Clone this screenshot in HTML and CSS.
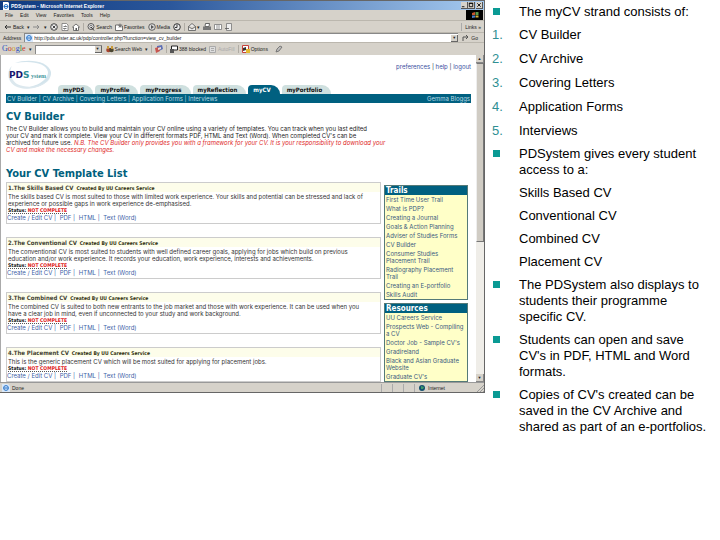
FILE: index.html
```html
<!DOCTYPE html>
<html lang="en">
<head>
<meta charset="utf-8">
<title>PDSystem - myCV</title>
<link rel="stylesheet" href="styles.css">
</head>
<body>
<main class="slide">
  <section class="browser" aria-label="PDSystem browser window">
    <header class="titlebar">
      <svg class="ic" viewBox="0 0 8 8"><path fill="#fff" d="M1 0h5l1 1v7H1z"/><circle cx="4" cy="4.500" r="2" fill="none" stroke="#2672c8"/><path stroke="#2672c8" d="M2 4.500h4"/></svg>
      <span class="grow">PDSystem - Microsoft Internet Explorer</span>
      <span class="winbtns">
        <button aria-label="Minimise"><svg viewBox="0 0 7 7"><path stroke="#000" d="M1 5.500h3"/></svg></button>
        <button aria-label="Maximise"><svg viewBox="0 0 7 7"><path fill="none" stroke="#000" d="M1.500 1.500h4v4h-4zM1 1.500h5"/></svg></button>
        <button aria-label="Close"><svg viewBox="0 0 7 7"><path stroke="#000" d="M1.500 1.500l4 4m0-4l-4 4"/></svg></button>
      </span>
    </header>

    <nav class="menubar">
      <button>File</button><button>Edit</button><button>View</button><button>Favorites</button><button>Tools</button><button>Help</button>
      <svg class="flag" viewBox="0 0 17 10"><path fill="#000" d="M0 0h17v10H0z"/><path fill="#c9552e" d="M6 3l3-1v3L6 5z"/><path fill="#5c9a4a" d="M9.500 2l3 0v3l-3 0z"/><path fill="#4a7ac4" d="M6 5.500l3 0v2L6 8z"/><path fill="#d5b23c" d="M9.500 5.500h3v2h-3z"/></svg>
    </nav>

    <div class="toolbar">
      <button><svg class="ic" viewBox="0 0 8 8"><path fill="none" stroke="#333" d="M7 4H1m2-2L1 4l2 2"/></svg>Back</button>
      <span class="arrow">▾</span>
      <button aria-label="Forward"><svg class="ic" viewBox="0 0 8 8"><path fill="none" stroke="#888" d="M0 4h6M4 2l2 2-2 2"/></svg></button>
      <span class="arrow">▾</span>
      <button aria-label="Stop"><svg class="ic" viewBox="0 0 8 8"><circle cx="4" cy="4" r="3.300" fill="#eee" stroke="#444"/><path stroke="#444" d="M2.500 2.500l3 3m0-3l-3 3"/></svg></button>
      <button aria-label="Refresh"><svg class="ic" viewBox="0 0 8 8"><path fill="#fff" stroke="#666" stroke-width=".7" d="M1 .5h4.500l1.500 1.500v5.500H1z"/><path fill="none" stroke="#444" stroke-width=".7" d="M2.500 3.500h3l-1-1m1 3h-3l1 1"/></svg></button>
      <button aria-label="Home"><svg class="ic" viewBox="0 0 8 8"><path fill="#fff" stroke="#555" stroke-width=".8" d="M.5 4L4 1l3.500 3H6.500v3.500h-5V4z"/><path fill="#555" d="M3.500 5h1.500v2.500H3.500z"/></svg></button>
      <i class="sep"></i>
      <button><svg class="ic" viewBox="0 0 8 8"><circle cx="4" cy="3.500" r="3" fill="#eee" stroke="#333" stroke-width=".8"/><path stroke="#333" d="M4 4l3 3.500"/><circle cx="4" cy="3.500" r="1.300" fill="none" stroke="#333" stroke-width=".6"/></svg>Search</button>
      <button><svg class="ic" viewBox="0 0 8 8"><path fill="#fff" stroke="#555" stroke-width=".8" d="M.5 2h3l1 1h3v4.500h-7z"/><path fill="#777" d="M5 0l.7 1.500H7.500L6 3l.5 2L5 4 3.500 5 4 3 2.500 1.500h1.800z"/></svg>Favorites</button>
      <button><svg class="ic" viewBox="0 0 8 8"><circle cx="4" cy="4" r="3.300" fill="#ddd" stroke="#444" stroke-width=".8"/><path fill="#555" d="M3 2l3 2-3 2z"/></svg>Media</button>
      <button aria-label="History"><svg class="ic" viewBox="0 0 8 8"><circle cx="4" cy="4" r="3.300" fill="#eee" stroke="#333"/><path fill="none" stroke="#333" d="M4 1.500V4.500H2"/></svg></button>
      <i class="sep"></i>
      <button aria-label="Mail"><svg class="ic" viewBox="0 0 8 8"><path fill="#eee" stroke="#555" stroke-width=".8" d="M.5 3.500L4 .5l3.500 3v4h-7zM.5 3.500L4 6l3.500-2.500"/></svg><span class="arrow">▾</span></button>
      <button aria-label="Print"><svg class="ic" viewBox="0 0 8 8"><path fill="#fff" stroke="#444" stroke-width=".8" d="M2.500.5h4L6 3.500H2z"/><path fill="#777" d="M0 3.500h8V7H0z"/></svg></button>
      <button aria-label="Edit"><svg class="ic" viewBox="0 0 8 8"><path fill="#fff" stroke="#777" stroke-width=".8" d="M.5 1.500h7v5h-7z"/><path stroke="#777" stroke-width=".8" d="M2 3h4M2 5h4"/></svg></button>
      <button aria-label="Discuss"><svg class="ic" viewBox="0 0 8 8"><path fill="#eee" stroke="#777" stroke-width=".8" d="M1.500.5h5v7h-5z"/><path stroke="#555" stroke-width=".8" d="M0 5.500h4"/></svg></button>
      <span class="links">Links »</span>
    </div>

    <div class="toolbar address">
      <label for="addr">Address</label>
      <span class="field">
        <svg class="ic" viewBox="0 0 8 8"><path fill="#d9e9fb" d="M0 0h6l2 2v6H0z"/><circle cx="4" cy="4" r="2.400" fill="none" stroke="#2672c8"/><path stroke="#2672c8" d="M2 4h4"/></svg>
        <input id="addr" type="text" value="http://pds.ulster.ac.uk/pdp/controller.php?function=view_cv_builder">
        <button class="drop" aria-label="Show addresses">▼</button>
      </span>
      <button class="go"><svg class="ic" viewBox="0 0 8 8"><path fill="none" stroke="#555" d="M1 7V3h5M4 1l2 2-2 2"/></svg>Go</button>
    </div>

    <div class="toolbar google">
      <label for="gs" class="brand"><b class="b">G</b><b class="r">o</b><b class="y">o</b><b class="b">g</b><b class="g">l</b><b class="r">e</b></label>
      <span class="arrow">▾</span>
      <span class="field short"><input id="gs" type="text"><button class="drop" aria-label="Show searches">▼</button></span>
      <button class="web"><svg class="ic" viewBox="0 0 8 8"><circle cx="2.500" cy="5" r="2.300" fill="#a8432f"/><circle cx="5.500" cy="5" r="2.300" fill="#4b4630"/><path fill="#ca9a3a" d="M1 1h2v3H1zM5 1h2v3H5z"/></svg>Search Web</button>
      <span class="arrow">▾</span>
      <i class="sep"></i>
      <button aria-label="News"><svg class="ic" viewBox="0 0 8 8"><path fill="#5d6fb5" d="M2 1l5-1 1 4-6 3z"/><path fill="#c8574f" d="M0 3l4-1 1 4-4 2z"/><path fill="#e6dcd8" d="M3 3l3-1v2L3 5z"/></svg></button>
      <i class="sep"></i>
      <button><svg class="ic" viewBox="0 0 8 8"><path fill="#fff" stroke="#222" d="M1.500 1h6v4h-6z"/><path fill="#555" d="M0 4h4v4H0z"/></svg>388 blocked</button>
      <button class="off"><svg class="ic" viewBox="0 0 8 8"><path fill="#ddd" stroke="#aaa" d="M.5 1.500h6v6h-6zM2 3.500h3M2 5.500h3"/></svg>AutoFill</button>
      <i class="sep"></i>
      <button><svg class="ic" viewBox="0 0 8 8"><path fill="#fff" stroke="#c8423a" d="M.5.5h6v7h-6z"/><path fill="#333" d="M1 3l3-1v3L1 6z"/><path fill="#e4b92f" d="M4 4h4v4H4z"/></svg>Options</button>
      <button class="pen" aria-label="Highlight"><svg class="ic" viewBox="0 0 8 8"><path fill="#bbb" stroke="#666" stroke-width=".8" d="M1 7l1-3 3-3 2 1-3 4z"/></svg></button>
    </div>

    <div class="view">
      <div class="page">
        <header class="top">
          <svg class="logo" viewBox="0 0 52 32" role="img" aria-label="PDSystem">
            <path fill="#d3e4ec" d="M9 4C22-1 43 2 45 13 46 24 30 31 15 29 28 29 42 22 42 13 41 4 25 1 9 4z"/>
            <path fill="#dce8ee" d="M6 7C3 12 4 20 11 25 24 31 39 26 45 18 38 29 20 33 9 27 0 21 1 11 6 7z"/>
            <text class="pd" x="3" y="19">PD</text><text class="s" x="17" y="19">S</text><text class="ys" x="25" y="19">ystem</text>
          </svg>
          <ul class="tabs">
            <li><a href="#pds">myPDS</a></li><li><a href="#profile">myProfile</a></li><li><a href="#progress">myProgress</a></li><li><a href="#reflection">myReflection</a></li><li><a class="on" href="#cv">myCV</a></li><li><a href="#portfolio">myPortfolio</a></li>
          </ul>
          <p class="user"><a href="#prefs">preferences</a> | <a href="#help">help</a> | <a href="#logout">logout</a></p>
        </header>
        <nav class="subnav">
          <span><a href="#b">CV Builder</a> | <a href="#a">CV Archive</a> | <a href="#l">Covering Letters</a> | <a href="#f">Application Forms</a> | <a href="#i">Interviews</a></span>
          <span>Gemma Bloggs</span>
        </nav>
        <h1>CV Builder</h1>
        <p class="intro">The CV Builder allows you to build and maintain your CV online using a variety of templates. You can track when you last edited<br>your CV and mark it complete. View your CV in different formats PDF, HTML and Text (Word). When completed CV's can be<br>archived for future use. <em>N.B. The CV Builder only provides you with a framework for your CV. It is your responsibility to download your<br>CV and make the necessary changes.</em></p>
        <div class="columns">
          <section class="templates">
            <h2>Your CV Template List</h2>
            <article>
              <h3>1.The Skills Based CV <small>Created By UU Careers Service</small></h3>
              <p>The skills based CV is most suited to those with limited work experience. Your skills and potential can be stressed and lack of<br>experience or possible gaps in work experience de-emphasised.</p>
              <p class="status"><abbr>Status: <span>NOT COMPLETE</span></abbr></p>
              <p class="acts"><a href="#e1">Create / Edit CV</a> | <a href="#p1">PDF</a> | <a href="#h1">HTML</a> | <a href="#t1">Text (Word)</a></p>
            </article>
            <article>
              <h3>2.The Conventional CV <small>Created By UU Careers Service</small></h3>
              <p>The conventional CV is most suited to students with well defined career goals, applying for jobs which build on previous<br>education and/or work experience. It records your education, work experience, interests and achievements.</p>
              <p class="status"><abbr>Status: <span>NOT COMPLETE</span></abbr></p>
              <p class="acts"><a href="#e2">Create / Edit CV</a> | <a href="#p2">PDF</a> | <a href="#h2">HTML</a> | <a href="#t2">Text (Word)</a></p>
            </article>
            <article>
              <h3>3.The Combined CV <small>Created By UU Careers Service</small></h3>
              <p>The combined CV is suited to both new entrants to the job market and those with work experience. It can be used when you<br>have a clear job in mind, even if unconnected to your study and work background.</p>
              <p class="status"><abbr>Status: <span>NOT COMPLETE</span></abbr></p>
              <p class="acts"><a href="#e3">Create / Edit CV</a> | <a href="#p3">PDF</a> | <a href="#h3">HTML</a> | <a href="#t3">Text (Word)</a></p>
            </article>
            <article>
              <h3>4.The Placement CV <small>Created By UU Careers Service</small></h3>
              <p>This is the generic placement CV which will be most suited for applying for placement jobs.</p>
              <p class="status"><abbr>Status: <span>NOT COMPLETE</span></abbr></p>
              <p class="acts"><a href="#e4">Create / Edit CV</a> | <a href="#p4">PDF</a> | <a href="#h4">HTML</a> | <a href="#t4">Text (Word)</a></p>
            </article>
          </section>
          <aside>
            <section class="box">
              <h2>Trails</h2>
              <ul>
                <li><a href="#s1">First Time User Trail</a></li><li><a href="#s2">What is PDP?</a></li><li><a href="#s3">Creating a Journal</a></li><li><a href="#s4">Goals &amp; Action Planning</a></li><li><a href="#s5">Adviser of Studies Forms</a></li><li><a href="#s6">CV Builder</a></li><li><a href="#s7">Consumer Studies<br>Placement Trail</a></li><li><a href="#s8">Radiography Placement<br>Trail</a></li><li><a href="#s9">Creating an E-portfolio</a></li><li><a href="#s10">Skills Audit</a></li>
              </ul>
            </section>
            <section class="box">
              <h2>Resources</h2>
              <ul>
                <li><a href="#r1">UU Careers Service</a></li><li><a href="#r2">Prospects Web - Compiling<br>a CV</a></li><li><a href="#r3">Doctor Job - Sample CV's</a></li><li><a href="#r4">Gradireland</a></li><li><a href="#r5">Black and Asian Graduate<br>Website</a></li><li><a href="#r6">Graduate CV's</a></li>
              </ul>
            </section>
          </aside>
        </div>
      </div>
      <div class="scroll">
        <button aria-label="Scroll up">▲</button>
        <span class="thumb"></span>
        <span class="track"></span>
        <button aria-label="Scroll down">▼</button>
      </div>
    </div>

    <footer class="statusbar">
      <span class="grow"><svg class="ic" viewBox="0 0 8 8"><path fill="#d9e9fb" d="M0 0h6l2 2v6H0z"/><circle cx="4" cy="4" r="2.400" fill="none" stroke="#2672c8"/><path stroke="#2672c8" d="M2 4h4"/></svg>Done</span>
      <i></i><i></i><i></i>
      <span class="zone"><svg class="ic" viewBox="0 0 8 8"><circle cx="4" cy="4" r="3" fill="#14506e"/><path fill="#3f9a6a" d="M3 2l3 1-1 2-2 0z"/></svg>Internet</span>
      <svg class="ic" viewBox="0 0 8 8"><path stroke="#999" d="M1 8l7-7M4 8l4-4M7 8l1-1"/></svg>
    </footer>
  </section>

  <section class="notes">
    <ul>
      <li>The myCV strand consists of:
        <ol><li>CV Builder</li><li>CV Archive</li><li>Covering Letters</li><li>Application Forms</li><li>Interviews</li></ol>
      </li>
      <li>PDSystem gives every student access to a:
        <p>Skills Based CV</p><p>Conventional CV</p><p>Combined CV</p><p>Placement CV</p>
      </li>
      <li>The PDSystem also displays to students their programme specific CV.</li>
      <li>Students can open and save CV's in PDF, HTML and Word formats.</li>
      <li>Copies of CV's created can be saved in the CV Archive and shared as part of an e-portfolios.</li>
    </ul>
  </section>
</main>
</body>
</html>
```
FILE: styles.css
```css
* { box-sizing: border-box; }
body { margin: 0; background: #fff; color: #000; }
h1, h2, h3, p, ul, ol { margin: 0; padding: 0; }
ul, ol { list-style: none; }
a { color: inherit; text-decoration: none; }
button, input { font: inherit; color: inherit; border: 0; padding: 0; margin: 0; background: none; min-width: 0; }
svg { display: block; }

.slide { display: grid; grid-template-columns: minmax(0, 1fr) 235px; align-items: start; }

/* Browser window */
.browser {
  background: #d6d2ca;
  border: solid #666;
  border-width: 1px 1px 1px 0;
  font: 5px/8px "Liberation Sans", Arial, sans-serif;
  color: #222;
}
.ic { width: 8px; height: 8px; flex: none; }
.grow { flex: 1; display: flex; align-items: center; gap: 2px; }

.titlebar {
  display: flex; align-items: center; gap: 1px;
  height: 9px; padding: 0 1px 0 2px;
  background: linear-gradient(90deg, #0f3a80, #2b579b 35%, #a6caf0);
  color: #fff; font-weight: bold;
}
.winbtns { display: flex; }
.winbtns button { width: 7px; height: 7px; background: #d6d2ca; border-right: 1px solid #555; border-bottom: 1px solid #555; }
.winbtns button:last-child { margin-left: 1px; }
.winbtns svg { width: 6px; height: 6px; }

.menubar { display: flex; align-items: center; gap: 7px; height: 11px; padding-left: 5px; border-bottom: 1px solid #bbb7ae; }
.flag { width: 17px; height: 10px; margin-left: auto; margin-right: 1px; }

.toolbar { display: flex; align-items: center; gap: 3px; height: 12px; padding-left: 4px; border-bottom: 1px solid #bbb7ae; }
.toolbar button { display: flex; align-items: center; gap: 1px; }
.arrow { font-size: 5px; }
.sep { width: 1px; height: 8px; background: #b0aca4; }
.links { margin-left: auto; padding: 0 3px; border-left: 1px solid #aaa; }

.address { height: 10px; padding-left: 3px; gap: 3px; }
.field { display: flex; align-items: center; gap: 1px; flex: 1; height: 9px; background: #fff; border: 1px solid #888; border-width: 1px 0 0 1px; }
.field input { flex: 1; height: 8px; outline: 0; }
.toolbar .drop { width: 7px; height: 7px; justify-content: center; font-size: 4px; background: #d6d2ca; border-right: 1px solid #666; border-bottom: 1px solid #666; }
.go { margin: 0 6px 0 1px; }

.google { height: 12px; padding-left: 2px; border-bottom: 0; }
.brand { font: 8px/10px "Liberation Serif", serif; }
.brand b { font-weight: normal; }
.b { color: #2a50c0; } .r { color: #c8372d; } .y { color: #c9a227; } .g { color: #2c8a3c; }
.short { flex: none; width: 67px; }
.web { margin-left: 1px; }
.off { color: #aaa; }
.pen { margin-left: 4px; }

/* Web page */
.view { display: flex; background: #fff; border-left: 1px solid #aaa; }
.page { flex: 1; min-width: 0; padding: 0 5px; font: 6px/7px Inter, Verdana, "DejaVu Sans", sans-serif; }

.top { display: flex; align-items: flex-end; height: 39px; }
.logo { width: 52px; height: 32px; align-self: center; }
.pd { font: bold 9px "DejaVu Sans", sans-serif; fill: #16166e; }
.s { font: bold 9px "DejaVu Sans", sans-serif; fill: #2f8c94; }
.ys { font: bold 6px "Liberation Serif", serif; fill: #3f969c; }
.tabs { display: flex; gap: 2px; font-family: "DejaVu Sans Condensed", "DejaVu Sans", sans-serif; font-weight: bold; }
.tabs a { display: block; height: 9px; padding: 1px 9px 0 5px; line-height: 8px; background: #cfe0df; border-radius: 4px 9px 0 0; color: #111; }
.tabs .on { background: #006080; color: #fff; }
.user { margin-left: auto; align-self: flex-start; padding-top: 8px; color: #234; white-space: nowrap; }
.user a { color: #3b4fa0; }

.subnav { display: flex; justify-content: space-between; padding: 1px; background: #006080; color: #b9dbe4; }

h1, .templates > h2 { font: bold 11px/12px "DejaVu Sans Condensed", "DejaVu Sans", sans-serif; color: #005f7d; }
h1 { margin-top: 8px; }
.intro { margin-top: 2px; color: #222; white-space: nowrap; }
.intro em { color: #e02a2a; }

.columns { display: grid; grid-template-columns: minmax(0, 1fr) 84px; gap: 3px; padding: 15px 3px 0 0; }
.templates > h2 { margin-bottom: 2px; }
article { border: 1px solid #ccc; color: #333; }
article + article { margin-top: 13px; }
article p { white-space: nowrap; padding-left: 1px; }
h3 { margin: 0 0 1px; padding: 1px 0 0 1px; font: bold 6px/7px "DejaVu Sans Condensed", "DejaVu Sans", sans-serif; color: #443; background: #fdfdea; }
h3 small { margin-left: 1px; font-size: 5px; color: #331; }
.status { font: bold 5px/6px "DejaVu Sans Condensed", "DejaVu Sans", sans-serif; color: #111; }
.status abbr { border-bottom: 1px dotted #555; }
.status span { color: #e01818; }
.acts { padding: 1px 0; line-height: 8px; color: #3f5fa8; }
.acts a + a { margin-left: 2px; }

aside { padding-top: 17px; display: grid; gap: 3px; align-content: start; }
.box { border: 1px solid #557a78; background: #ffffc8; color: #3a5a80; }
.box h2 { padding-left: 1px; font: bold 8px/9px "DejaVu Sans Condensed", "DejaVu Sans", sans-serif; color: #fff; background: #006080; }
.box ul { display: grid; gap: 2px; padding: 1px; white-space: nowrap; }

.scroll { display: flex; flex-direction: column; width: 8px; background: #efede8; }
.scroll button { height: 8px; font-size: 4px; line-height: 7px; background: #d6d2ca; border: 1px solid #888; border-width: 0 1px 1px 0; }
.thumb { flex: 179; background: #d0ccc4; border: 1px solid #777; border-left-color: #eee; }
.track { flex: 133; }

.statusbar { display: flex; align-items: center; height: 10px; padding-left: 2px; border-top: 1px solid #999; }
.statusbar i { width: 11px; height: 8px; border-left: 1px solid #aaa; }
.zone { display: flex; align-items: center; gap: 2px; width: 62px; padding-left: 3px; border-left: 1px solid #aaa; }

/* Notes */
.notes { padding: 4px 8px 0 7px; font: 13px/16px "Liberation Sans", Arial, sans-serif; }
.notes ul, .notes ol { display: grid; }
.notes ul { gap: 7px; counter-reset: n; }
.notes ul > li { position: relative; padding-left: 27px; }
.notes ul > li::before { content: ""; position: absolute; left: 1px; top: 4px; width: 7px; height: 7px; background: #0a9a94; }
.notes ol { gap: 8px; margin-top: 7px; }
.notes ol li { position: relative; counter-increment: n; }
.notes ol li::before { content: counter(n) "."; position: absolute; left: -27px; color: #2f8f93; }
.notes p { margin-top: 7px; }
```
